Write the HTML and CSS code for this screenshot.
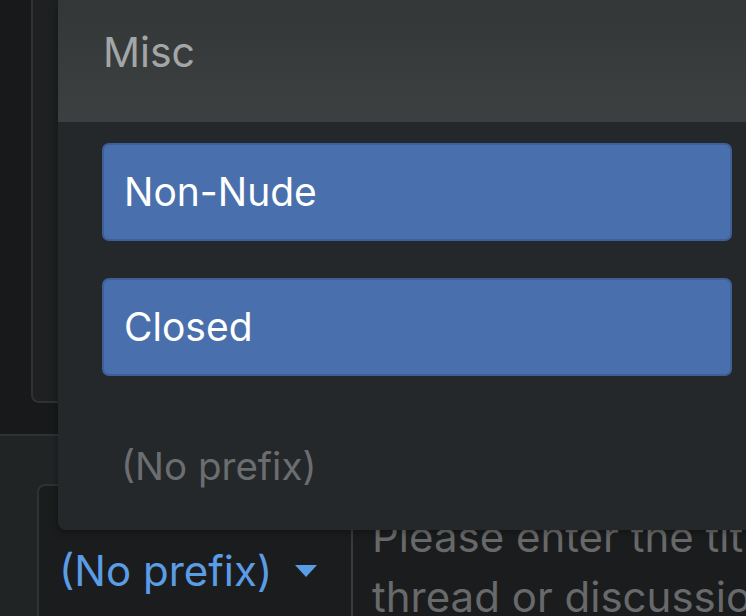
FILE: index.html
```html
<!DOCTYPE html>
<html>
<head>
<meta charset="utf-8">
<link rel="stylesheet" href="styles.css">
</head>
<body>
<div class="page">
  <div class="top-area">
    <div class="top-box"></div>
  </div>
  <div class="bottom-area">
    <div class="input-box">
      <div class="prefix">
        <span class="prefix-label">(No prefix)</span>
        <svg class="caret" width="24" height="14" viewBox="0 0 24 14"><path d="M1 1 H23 L12 13 Z" fill="#5a9de6"/></svg>
      </div>
      <div class="title-input">Please enter the title for your thread or discussion</div>
    </div>
  </div>
</div>
<div class="popup">
  <div class="popup-header">Misc</div>
  <div class="popup-body">
    <div class="option">Non-Nude</div>
    <div class="option">Closed</div>
    <div class="no-prefix">(No prefix)</div>
  </div>
</div>
</body>
</html>
```
FILE: styles.css
```css
html, body {
  margin: 0;
  padding: 0;
}
body {
  width: 746px;
  height: 616px;
  overflow: hidden;
  background: #1a1b1c;
  font-family: Inter, "Noto Sans", sans-serif;
  position: relative;
}
.page {
  display: flex;
  flex-direction: column;
  height: 616px;
}
.top-area {
  flex: none;
  height: 434px;
  border-bottom: 2px solid #2f3233;
  background: #18191a;
}
.top-box {
  margin-left: 31px;
  height: 401px;
  background: #1e2021;
  border-left: 2px solid #2f3233;
  border-bottom: 2px solid #2f3233;
  border-bottom-left-radius: 8px;
}
.bottom-area {
  flex: 1;
  min-height: 0;
  background: #212425;
  padding: 48px 0 0 37px;
  display: flex;
  overflow: hidden;
}
.input-box {
  flex: 1;
  display: flex;
  background: #1b1c1d;
  border-top: 2px solid #2f3233;
  border-left: 2px solid #2f3233;
  border-top-left-radius: 8px;
}
.prefix {
  width: 314px;
  flex: none;
  display: flex;
  align-items: flex-start;
  padding: 60px 0 0 20px;
  box-sizing: border-box;
  border-right: 2px solid #393c3d;
  gap: 22px;
}
.prefix-label {
  color: #5a9de6;
  font-size: 42px;
  line-height: 50px;
}
.caret {
  margin-top: 18px;
}
.title-input {
  flex: none;
  width: 620px;
  padding: 21px 0 0 19px;
  color: #68696a;
  font-size: 42px;
  line-height: 60px;
}
.popup {
  position: absolute;
  left: 58px;
  top: 0;
  width: 718px;
  height: 530px;
  background: #25282a;
  border-bottom-left-radius: 8px;
  box-shadow: 0 2px 8px rgba(0,0,0,0.35);
  display: flex;
  flex-direction: column;
}
.popup-header {
  height: 122px;
  flex: none;
  box-sizing: border-box;
  padding: 27px 0 0 45px;
  background: linear-gradient(#343738, #3c4041);
  color: #a3a6a7;
  font-size: 41px;
  line-height: 50px;
}
.popup-body {
  padding: 21px 44px 0 44px;
  display: flex;
  flex-direction: column;
  gap: 37px;
}
.option {
  height: 98px;
  box-sizing: border-box;
  background: #4a6fad;
  border: 2px solid #3f5f96;
  border-radius: 7px;
  color: #ffffff;
  font-size: 39px;
  line-height: 94px;
  padding-left: 20px;
}
.no-prefix {
  color: #6b6e70;
  font-size: 38.5px;
  line-height: 48px;
  padding: 29px 0 0 19px;
}
```
